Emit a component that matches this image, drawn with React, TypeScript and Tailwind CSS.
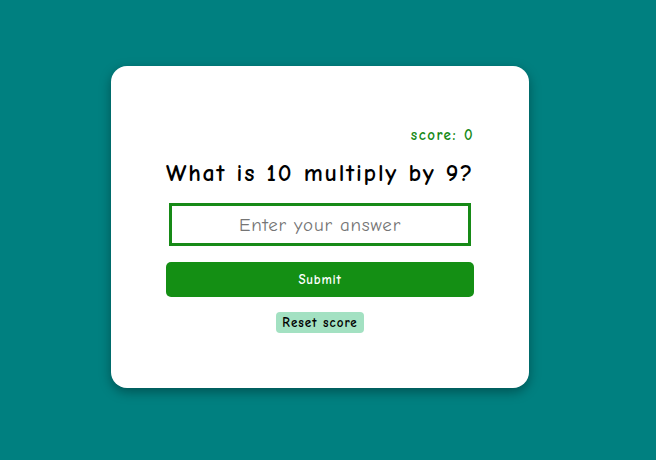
export default function App() {
  return (
    <div className="flex h-[460px] w-full items-center justify-center bg-[#008080] pr-4 pb-[6px] font-['Comic_Sans_MS','Comic_Neue',cursive]">
      <div className="flex h-[322px] w-[418px] flex-col items-center rounded-2xl bg-white px-[55px] pt-[59px] shadow-[0_4px_12px_rgba(0,0,0,0.35)]">
        <div className="w-full text-right text-[15px] font-bold leading-5 tracking-[1.5px] text-[#178a17]">
          score: 0
        </div>
        <h1 className="mt-[12px] text-[24px] font-bold leading-8 tracking-[1.8px] text-black">
          What is 10 multiply by 9?
        </h1>
        <input
          className="mt-[14px] h-[43px] w-[302px] border-[3px] border-[#178a17] text-center text-[19px] tracking-[0.8px] outline-none placeholder:text-[#757575]"
          placeholder="Enter your answer"
        />
        <button className="mt-4 h-[35px] w-full rounded-[5px] bg-[#148f14] text-[13px] font-bold tracking-[0.8px] text-white">
          Submit
        </button>
        <button className="mt-[15px] h-[21px] rounded-[4px] bg-[#a3e1c2] px-[6px] text-[13px] font-bold tracking-[1px] text-black">
          Reset score
        </button>
      </div>
    </div>
  );
}
